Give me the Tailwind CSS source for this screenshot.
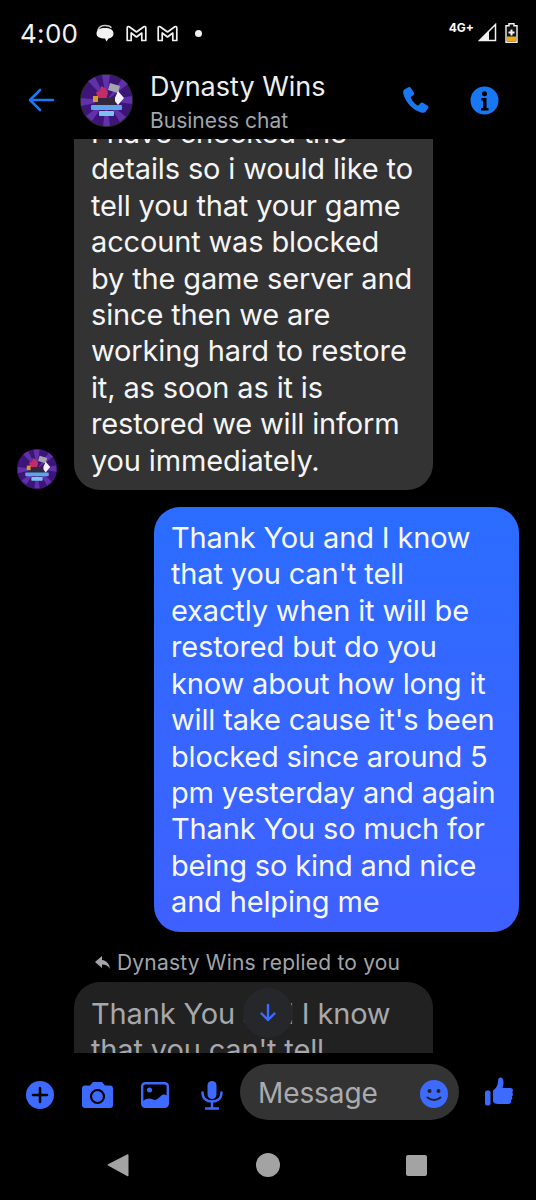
<!DOCTYPE html>
<html lang="en">
<head>
<meta charset="UTF-8">
<meta name="viewport" content="width=device-width, initial-scale=1.0">
<script src="https://cdn.jsdelivr.net/npm/@tailwindcss/browser@4"></script>
<title>Dynasty Wins</title>
</head>
<body class="bg-black">
<div class="w-[536px] h-[1200px] bg-black flex flex-col overflow-hidden font-['Inter',sans-serif] text-white">

    <!-- status bar -->
    <div class="h-[67px] shrink-0 flex items-center pl-[20px] pr-[18px]">
        <span class="text-[26px] leading-none tracking-[0.3px] text-[#f2f2f2]">4:00</span>
        <div class="flex items-center ml-[17px]">
            <svg width="20" height="19" viewBox="0 0 20 19"><path d="M3 6c1-3 4-4.500 7-4.500 3 0 5 .6 6 2" fill="none" stroke="#c9c9c9" stroke-width="1.500" stroke-linecap="round"/><path d="M10 4c5 0 8.500 1.800 8.500 5.500 0 3-2.300 4.500-5 5L11.500 17.500 10 14.500C4.800 14.500 1.500 13 1.500 9.500 1.500 5.800 5 4 10 4z" fill="#f2f2f2"/></svg>
            <svg width="21" height="17" viewBox="0 0 21 17" class="ml-[11px]"><path d="M1.200 15.500V3q0-2 2-1.300L10.500 7l7.300-5.300q2-.7 2 1.300V15.500h-4V8L10.500 12 5.200 8v7.500z" fill="#000" stroke="#f2f2f2" stroke-width="1.700" stroke-linejoin="round"/></svg>
            <svg width="21" height="17" viewBox="0 0 21 17" class="ml-[10px]"><path d="M1.200 15.500V3q0-2 2-1.300L10.500 7l7.300-5.300q2-.7 2 1.300V15.500h-4V8L10.500 12 5.200 8v7.500z" fill="#000" stroke="#f2f2f2" stroke-width="1.700" stroke-linejoin="round"/></svg>
            <span class="w-[7px] h-[7px] rounded-full bg-[#f2f2f2] ml-[17px]"></span>
        </div>
        <div class="ml-auto flex items-start mb-[1px]">
            <span class="text-[12px] font-bold leading-none mt-[-1px] mr-[4px]">4G+</span>
            <svg width="19" height="19" viewBox="0 0 19 19"><path d="M17.500 1.500V17.500H1.500z" fill="none" stroke="#f2f2f2" stroke-width="1.500"/><path d="M11 8V17.500H1.500z" fill="#f2f2f2"/></svg>
            <svg width="13" height="20" viewBox="0 0 13 20" class="ml-[8px]"><path d="M4 .7h5v2h3v16.600H1V2.700h3z" fill="#111" stroke="#f2f2f2" stroke-width="1.400"/><rect x="2" y="13.500" width="9" height="5" fill="#f0a818"/><path d="M6.500 6.500v6M3.500 9.500h6" stroke="#f2f2f2" stroke-width="2"/></svg>
        </div>
    </div>

    <!-- header -->
    <div class="h-[72px] shrink-0 flex items-center pb-[6px]">
        <svg width="28" height="24" viewBox="0 0 28 24" class="ml-[27px]"><path d="M26 12H3M13 2 3 12l10 10" fill="none" stroke="#1877f2" stroke-width="2.600" stroke-linecap="round" stroke-linejoin="round"/></svg>
        <svg width="53" height="53" viewBox="0 0 53 53" class="ml-[25px] shrink-0">
            <circle cx="26.500" cy="26.500" r="26.500" fill="#2a2a2e"/>
            <circle cx="26.500" cy="26.500" r="25.500" fill="#3d1578"/>
            <path d="M26.500 26.500 8 7 15 3zM26.500 26.500 22 1 30 1zM26.500 26.500 42 5 48 10zM26.500 26.500 52 22 52 30zM26.500 26.500 46 43 40 48zM26.500 26.500 30 52 23 52zM26.500 26.500 12 47 6 42zM26.500 26.500 1 32 1 24z" fill="#6031a8"/>
            <path d="M30 9l10 3-2 7-10-3z" fill="#a5a5b2"/>
            <path d="M38 17l6 7-6 7-4-5z" fill="#f4f2f8"/>
            <path d="M16 18l4-1 1-5 4 2 3 5-2 6h-8z" fill="#c42c66"/>
            <rect x="15" y="24" width="20" height="9" fill="#33263f"/>
            <rect x="13" y="22" width="5" height="6" fill="#d69a2e"/>
            <rect x="11" y="31" width="31" height="5" rx="1" fill="#5aa6e8"/>
            <rect x="19" y="37" width="15" height="5" rx="1" fill="#7cc0f0"/>
        </svg>
        <div class="ml-[17px] flex flex-col mt-[4px]">
            <span class="text-[27px] leading-[34px] text-[#eeeeee]">Dynasty Wins</span>
            <span class="text-[21px] leading-[27px] mt-[3px] text-[#a3a5a9]">Business chat</span>
        </div>
        <svg width="28" height="28" viewBox="0 0 28 28" class="ml-auto"><path d="M6.500 1.200 2.600 3.300C1 4.300.8 6.400 1.500 8.500 3.800 16.500 10.500 23.800 19 26.600c2 .6 4 .200 5-1.300l2.200-3.300c.5-.8.3-1.800-.5-2.300l-4.800-3c-.8-.5-1.700-.3-2.300.4l-1.600 2c-.4.500-1 .6-1.500.3-2.800-1.600-5.300-4.500-6.600-7.500-.2-.6 0-1.200.5-1.500l2-1.400c.7-.5 1-1.400.6-2.200L9 2c-.5-.9-1.600-1.200-2.500-.8z" fill="#1877f2"/></svg>
        <svg width="29" height="29" viewBox="0 0 29 29" class="ml-[40px] mr-[37px]"><circle cx="14.500" cy="14.500" r="14" fill="#1877f2"/><circle cx="14.500" cy="7.800" r="2.500" fill="#000"/><path d="M11.500 12h5v10h2v2.500h-7.500V22h2v-7.500h-1.500z" fill="#000"/></svg>
    </div>

    <!-- messages -->
    <div class="relative h-[914px] shrink-0 overflow-hidden text-[29px] leading-[36.4px] tracking-[-0.15px]">
        <div class="flex flex-col mt-[-34px]">
            <div class="flex items-end">
                <svg width="40" height="40" viewBox="0 0 53 53" class="ml-[17px] mb-[1px] shrink-0">
                    <circle cx="26.500" cy="26.500" r="26.500" fill="#3d1578"/>
                    <path d="M26.500 26.500 8 7 15 3zM26.500 26.500 22 1 30 1zM26.500 26.500 42 5 48 10zM26.500 26.500 52 22 52 30zM26.500 26.500 46 43 40 48zM26.500 26.500 30 52 23 52zM26.500 26.500 12 47 6 42zM26.500 26.500 1 32 1 24z" fill="#6031a8"/>
                    <path d="M30 9l10 3-2 7-10-3z" fill="#a5a5b2"/>
                    <path d="M38 17l6 7-6 7-4-5z" fill="#f4f2f8"/>
                    <path d="M16 18l4-1 1-5 4 2 3 5-2 6h-8z" fill="#c42c66"/>
                    <rect x="15" y="24" width="20" height="9" fill="#33263f"/>
                    <rect x="13" y="22" width="5" height="6" fill="#d69a2e"/>
                    <rect x="11" y="31" width="31" height="5" rx="1" fill="#5aa6e8"/>
                    <rect x="19" y="37" width="15" height="5" rx="1" fill="#7cc0f0"/>
                </svg>
                <div class="ml-[17px] w-[359px] bg-[#333333] rounded-[26px] pl-[17px] pr-[10px] pt-[10px] pb-[11px] text-[#f5f5f5]">
                    <p>I have checked the<br>details so i would like to<br>tell you that your game<br>account was blocked<br>by the game server and<br>since then we are<br>working hard to restore<br>it, as soon as it is<br>restored we will inform<br>you immediately.</p>
                </div>
            </div>

            <div class="self-end mr-[17px] mt-[17px] w-[365px] h-[425px] rounded-[26px] bg-linear-to-b from-[#2b6cff] to-[#3e60ff] pl-[17px] pt-[13px] text-[#f7f8ff]">
                <p>Thank You and I know<br>that you can't tell<br>exactly when it will be<br>restored but do you<br>know about how long it<br>will take cause it's been<br>blocked since around 5<br>pm yesterday and again<br>Thank You so much for<br>being so kind and nice<br>and helping me</p>
            </div>

            <div class="flex items-center ml-[95px] mt-[19px] h-[24px] text-[21px] leading-[24px] tracking-[0.2px] text-[#a3a5a9]">
                <svg width="16" height="14" viewBox="0 0 16 14" class="mr-[6px]"><path d="M7 0 0 6l7 6V8.500c3.500 0 6 1 8 4.500-.5-5-3.500-8.500-8-9z" fill="#a3a5a9"/></svg>
                Dynasty Wins replied to you
            </div>

            <div class="ml-[74px] mt-[7px] w-[359px] h-[140px] rounded-[26px] bg-[#212122] pl-[17px] pt-[14px] text-[#a6a8ac]">
                <p>Thank You and I know<br>that you can't tell</p>
            </div>
        </div>

        <!-- scroll to latest, floats over the messages -->
        <div class="absolute left-[243px] top-[849px] w-[50px] h-[50px] rounded-full bg-[#26272b] flex items-center justify-center">
            <svg width="18" height="20" viewBox="0 0 18 20"><path d="M9 2v15M2.500 10.500 9 17l6.500-6.500" fill="none" stroke="#3d6bff" stroke-width="2.400" stroke-linecap="round" stroke-linejoin="round"/></svg>
        </div>
    </div>

    <!-- composer -->
    <div class="h-[81px] shrink-0 flex items-center">
        <svg width="28" height="28" viewBox="0 0 28 28" class="ml-[26px] mt-[3px]"><circle cx="14" cy="14" r="14" fill="#3d6bff"/><path d="M14 7v14M7 14h14" stroke="#000" stroke-width="2.600" stroke-linecap="round"/></svg>
        <svg width="31" height="26" viewBox="0 0 31 26" class="ml-[28px] mt-[3px]"><path d="M11 0h9l3 3.500h5q3 0 3 3V23q0 3-3 3H3q-3 0-3-3V6.500q0-3 3-3h5z" fill="#3d6bff"/><circle cx="15.500" cy="14.500" r="6.500" fill="none" stroke="#000" stroke-width="2.200"/></svg>
        <svg width="28" height="26" viewBox="0 0 28 26" class="ml-[28px] mt-[3px]"><rect x="1.200" y="1.200" width="25.600" height="23.600" rx="3" fill="none" stroke="#3d6bff" stroke-width="2.400"/><circle cx="8.500" cy="8" r="2.500" fill="#3d6bff"/><path d="M2 19c4-3 7-3 10-1.500 4 2 7-3.500 9-4.500 2-.8 3.500-.5 5 .5V23q0 1-1 1H3q-1 0-1-1z" fill="#3d6bff"/></svg>
        <svg width="22" height="29" viewBox="0 0 22 29" class="ml-[32px] mt-[3px]"><rect x="6.500" y="0" width="9" height="18" rx="4.500" fill="#3d6bff"/><path d="M1.500 11.500c0 6 4 9 9.500 9s9.500-3 9.500-9M11 20.500v6M5 27.500h12" fill="none" stroke="#3d6bff" stroke-width="2.400" stroke-linecap="round"/></svg>
        <div class="ml-[17px] mt-[-4px] w-[219px] h-[56px] rounded-full bg-[#333333] flex items-center pl-[18px] pr-[11px]">
            <span class="text-[28px] tracking-[-0.1px] text-[#a9abaf] mt-[2px]">Message</span>
            <svg width="28" height="28" viewBox="0 0 28 28" class="ml-auto mt-[5px]"><circle cx="14" cy="14" r="14" fill="#3d6bff"/><circle cx="9.500" cy="11" r="2" fill="#222"/><circle cx="18.500" cy="11" r="2" fill="#222"/><path d="M7.500 17.500q6.500 5 13 0" fill="none" stroke="#222" stroke-width="2" stroke-linecap="round"/></svg>
        </div>
        <svg width="28" height="30" viewBox="0 0 28 29" class="ml-[26px] mt-[-4px]"><rect x="0" y="13" width="5.500" height="15" rx="2" fill="#3d6bff"/><path d="M8 13c3-2 5-5 5-9.500C13 1.500 14 0 15.500 0 17.500 0 18.500 2 18.500 5c0 2-.5 4-1 5.500h8c1.500 0 2.500 1 2.500 2.300 0 .9-.4 1.500-.9 2 .6.500.9 1.100.9 2 0 1-.5 1.700-1.200 2.200.3.500.5 1 .5 1.600 0 1-.6 1.800-1.500 2.200.2.400.3.800.3 1.200 0 1.500-1 2.500-2.500 2.500H13c-2.500 0-5-1-5-3z" fill="#3d6bff"/></svg>
    </div>

    <!-- android nav bar -->
    <div class="flex-1 relative">
        <svg width="22" height="24" viewBox="0 0 22 24" class="absolute left-[107px] top-[19px]"><path d="M20 1.500q1.500-.8 1.500 1V22q0 1.800-1.500.9L1 12.500q-1-.5 0-1.200z" fill="#a3a3a3"/></svg>
        <div class="absolute left-[256px] top-[19px] w-[24px] h-[24px] rounded-full bg-[#a3a3a3]"></div>
        <div class="absolute left-[406px] top-[21px] w-[21px] h-[21px] rounded-[2px] bg-[#a3a3a3]"></div>
    </div>
</div>
</body>
</html>
